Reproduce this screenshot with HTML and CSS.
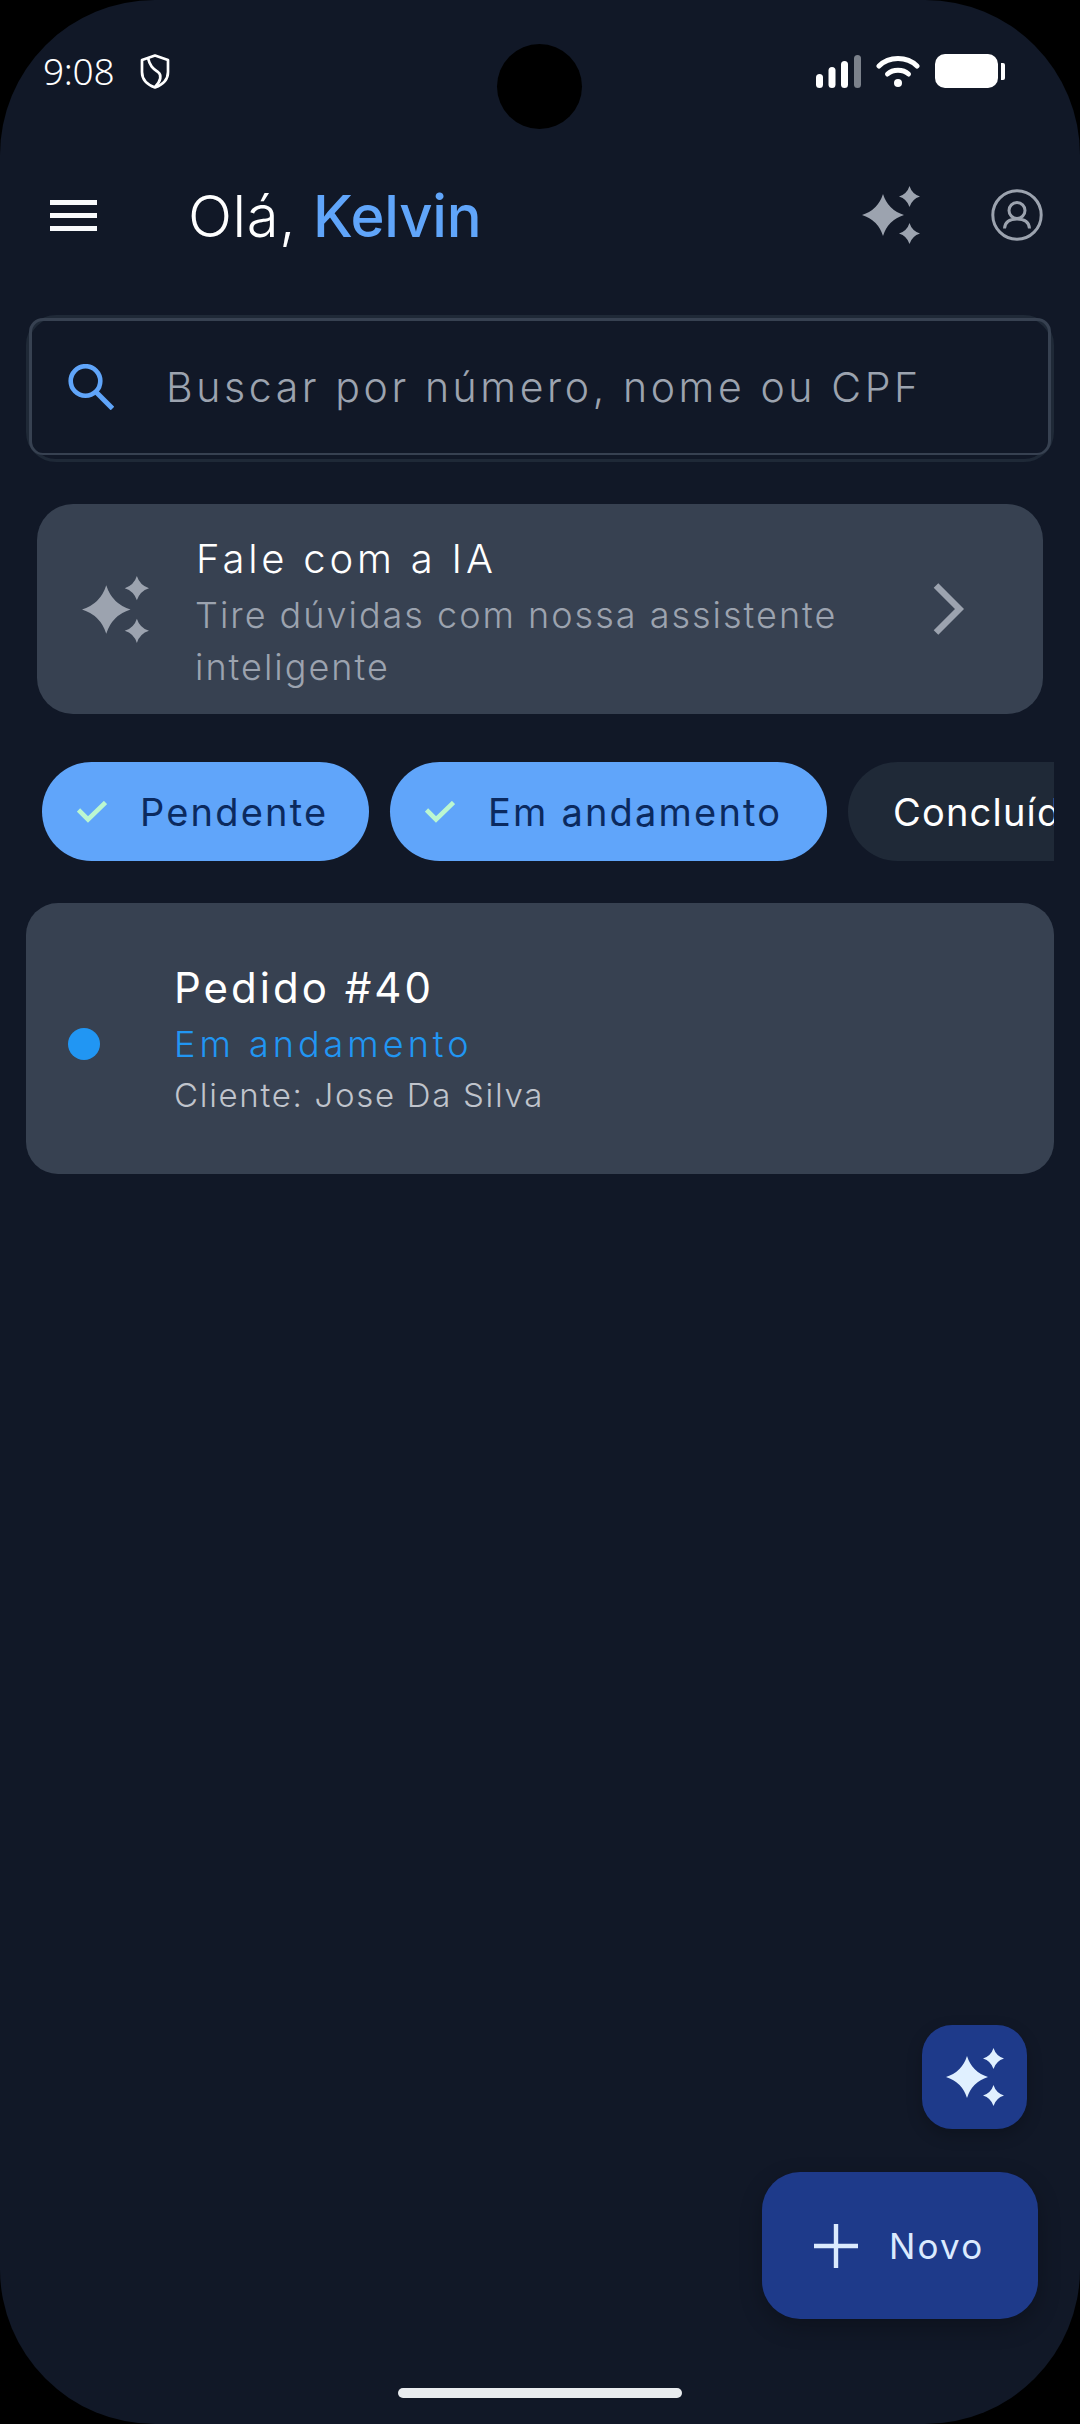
FILE: index.html
```html
<!DOCTYPE html>
<html lang="pt-BR">
<head>
<meta charset="utf-8">
<title>Pedidos</title>
<link rel="stylesheet" href="styles.css">
</head>
<body>
<svg class="defs" width="0" height="0" aria-hidden="true">
  <symbol id="sparkles" viewBox="0 0 58 58">
    <path d="M21 8Q26 24 42 29Q26 34 21 50Q16 34 0 29Q16 24 21 8Z"/>
    <path d="M47.5 0Q50 8 58 10.5Q50 13 47.5 21Q45 13 37 10.5Q45 8 47.5 0Z"/>
    <path d="M47.5 37Q50 45 58 47.5Q50 50 47.5 58Q45 50 37 47.5Q45 45 47.5 37Z"/>
  </symbol>
</svg>
<main class="phone">
  <div class="camera"></div>

  <div class="status">
    <span class="time">9:08</span>
    <svg class="shield" viewBox="0 0 30 35" fill="none" stroke="#fff" stroke-width="2.7" stroke-linejoin="round">
      <path d="M15 1.5L28 6V18C28 26 22 31 15 33.5C8 31 2 26 2 18V6Z"/>
      <path d="M8 4C10 13 14 15 18 18C22 21 21 27 15 33"/>
    </svg>
    <div class="status-right">
      <svg class="signal" viewBox="0 0 45 33">
        <rect x="0" y="19" width="7" height="14" rx="3.5" fill="#fff"/>
        <rect x="12.5" y="12" width="7" height="21" rx="3.5" fill="#fff"/>
        <rect x="25" y="6" width="7" height="27" rx="3.5" fill="#fff"/>
        <rect x="38" y="0" width="7" height="33" rx="3.5" fill="#7b818b"/>
      </svg>
      <svg class="wifi" viewBox="0 0 44 33" fill="none" stroke="#fff" stroke-width="5" stroke-linecap="round">
        <path d="M3 11C13 1 31 1 41 11"/>
        <path d="M11.5 19C17 14 27 14 32.5 19"/>
        <circle cx="22" cy="28" r="4" fill="#fff" stroke="none"/>
      </svg>
      <div class="battery"><span class="battery-body"></span><span class="battery-nub"></span></div>
    </div>
  </div>

  <header class="topbar">
    <div class="menu"><span></span><span></span><span></span></div>
    <h1 class="greeting">Olá, <b>Kelvin</b></h1>
    <div class="top-actions">
      <svg class="spark spark-head"><use href="#sparkles"/></svg>
      <svg class="profile" viewBox="0 0 52 52" fill="none" stroke="#9ca3af" stroke-width="3">
        <circle cx="26" cy="26" r="24.2"/>
        <circle cx="26" cy="21.5" r="8"/>
        <path d="M13.5 39.5C14 33 19 30 26 30C33 30 38 33 38.5 39.5"/>
      </svg>
    </div>
  </header>

  <div class="search-wrap">
    <div class="search">
      <svg class="search-icon" viewBox="0 0 46 46" fill="none" stroke="#60a5fa" stroke-width="4.6">
        <circle cx="17.5" cy="17" r="14.8"/>
        <path d="M28 28L44.5 44.5" stroke-width="5"/>
      </svg>
      <span class="placeholder">Buscar por número, nome ou CPF</span>
    </div>
  </div>

  <section class="ai-card">
    <svg class="spark spark-ai"><use href="#sparkles"/></svg>
    <div class="ai-text">
      <div class="ai-title">Fale com a IA</div>
      <div class="ai-sub">Tire dúvidas com nossa assistente<br>inteligente</div>
    </div>
    <svg class="chevron" viewBox="0 0 31 52" fill="none" stroke="#9ca3af" stroke-width="6.5">
      <path d="M3 2.5L26.5 26L3 49.5"/>
    </svg>
  </section>

  <div class="chips">
    <div class="chip chip-on">
      <svg class="check" viewBox="0 0 30 22" fill="none" stroke="#bbf7d0" stroke-width="4.6"><path d="M1.5 9L11 18.5L28.5 1.5"/></svg>
      <span class="chip-label">Pendente</span>
    </div>
    <div class="chip chip-on">
      <svg class="check" viewBox="0 0 30 22" fill="none" stroke="#bbf7d0" stroke-width="4.6"><path d="M1.5 9L11 18.5L28.5 1.5"/></svg>
      <span class="chip-label">Em andamento</span>
    </div>
    <div class="chip chip-off"><span class="chip-done">Concluído</span></div>
  </div>

  <article class="order">
    <span class="dot"></span>
    <div class="order-text">
      <div class="order-title">Pedido #40</div>
      <div class="order-state">Em andamento</div>
      <div class="order-client">Cliente: Jose Da Silva</div>
    </div>
  </article>

  <div class="fabs">
    <button class="fab-ai" type="button"><svg class="spark spark-fab"><use href="#sparkles"/></svg></button>
    <button class="fab-new" type="button">
      <svg class="plus" viewBox="0 0 44 44" fill="none" stroke="#dbeafe" stroke-width="4.4"><path d="M22 0V44M0 22H44"/></svg>
      <span>Novo</span>
    </button>
  </div>

  <div class="homebar"></div>
</main>
</body>
</html>
```

FILE: styles.css
```css
* { box-sizing: border-box; }
html, body { margin: 0; padding: 0; background: #000; }
body { width: 1080px; height: 2424px; overflow: hidden; font-family: "Inter", "Liberation Sans", sans-serif; }
.defs { position: absolute; }
.phone { position: relative; width: 1080px; height: 2424px; background: #111827; border-radius: 155px; overflow: hidden; display: flex; flex-direction: column; }
.camera { position: absolute; left: 497px; top: 44px; width: 85px; height: 85px; border-radius: 50%; background: #000; }

.status { height: 142px; flex: none; display: flex; align-items: center; padding: 0 75px 0 43px; color: #fff; }
.time { font-family: "Noto Sans", sans-serif; font-size: 37px; line-height: 44px; font-weight: 300; letter-spacing: -0.3px; width: 70px; white-space: nowrap; }
.shield { width: 30px; height: 35px; margin-left: 27px; }
.status-right { margin-left: auto; display: flex; align-items: center; }
.signal { width: 45px; height: 33px; }
.wifi { width: 44px; height: 33px; margin-left: 15px; }
.battery { display: flex; align-items: center; margin-left: 15px; }
.battery-body { width: 63px; height: 34px; background: #fff; border-radius: 10px; }
.battery-nub { width: 4px; height: 17px; margin-left: 3px; background: #fff; border-radius: 0 2px 2px 0; }

.topbar { height: 146px; flex: none; display: flex; align-items: center; padding: 0 37px 0 50px; }
.menu { width: 47px; display: flex; flex-direction: column; gap: 8px; }
.menu span { height: 5px; background: #f8fafc; }
.greeting { margin: 2px 0 0 91px; font-size: 58px; line-height: 70px; font-weight: 300; color: #fff; letter-spacing: 0.6px; white-space: nowrap; }
.greeting b { font-weight: 500; color: #60a5fa; letter-spacing: -0.2px; }
.top-actions { margin-left: auto; display: flex; align-items: center; gap: 71px; }
.spark { display: block; fill: #9ca3af; }
.spark-head { width: 58px; height: 58px; }
.profile { width: 52px; height: 52px; }

.search-wrap { flex: none; height: 147px; margin: 27px 26px 0; border: 3px solid #1f2937; border-radius: 30px; }
.search { height: 137px; border: 3px solid #374151; border-bottom-width: 2px; border-radius: 14px; display: flex; align-items: center; padding: 0 0 0 36px; }
.search-icon { width: 46px; height: 46px; flex: none; }
.placeholder { margin-left: 52px; font-size: 41px; line-height: 50px; font-weight: 300; color: #9ca3af; letter-spacing: 3.6px; white-space: nowrap; }

.ai-card { flex: none; height: 210px; margin: 42px 37px 0; border-radius: 36px; background: #374151; display: flex; align-items: center; padding: 0 79px 0 45px; }
.spark-ai { width: 67px; height: 67px; flex: none; }
.ai-text { margin-left: 46px; padding-top: 4px; }
.ai-title { font-size: 40px; line-height: 60px; font-weight: 300; color: #fff; letter-spacing: 3.8px; white-space: nowrap; margin-left: 1px; }
.ai-sub { font-size: 36px; line-height: 52px; font-weight: 300; color: #9ca3af; letter-spacing: 2px; white-space: nowrap; }
.chevron { width: 31px; height: 52px; margin-left: auto; flex: none; }

.chips { flex: none; height: 99px; margin: 48px 26px 0 42px; display: flex; gap: 21px; overflow: hidden; }
.chip { flex: none; height: 99px; border-radius: 50px; display: flex; align-items: center; font-size: 38px; line-height: 46px; font-weight: 400; white-space: nowrap; }
.chip-on { background: #60a5fa; color: #0b2a5f; padding: 0 0 0 35px; }
.chip-on:nth-child(1) { width: 327px; }
.chip-on:nth-child(2) { width: 437px; }
.chip-off { background: #1f2937; color: #fff; padding: 0 48px 0 45px; }
.check { width: 30px; height: 22px; flex: none; }
.chip-label { margin-left: 33px; letter-spacing: 2.2px; }
.chip-done { letter-spacing: 1.2px; }

.order { flex: none; height: 271px; margin: 42px 26px 0; border-radius: 32px; background: #374151; display: flex; align-items: center; padding: 0 0 0 42px; }
.dot { width: 32px; height: 32px; flex: none; margin-top: 10px; border-radius: 50%; background: #2196f3; }
.order-text { margin-left: 74px; }
.order-title { font-size: 42px; line-height: 61px; font-weight: 400; color: #fff; letter-spacing: 3px; white-space: nowrap; }
.order-state { font-size: 36px; line-height: 52px; font-weight: 300; color: #2196f3; letter-spacing: 4px; white-space: nowrap; }
.order-client { font-size: 33px; line-height: 50px; font-weight: 300; color: #c0c4cc; letter-spacing: 1.7px; white-space: nowrap; }

.fabs { position: absolute; right: 42px; bottom: 105px; display: flex; flex-direction: column; align-items: flex-end; gap: 43px; }
.fab-ai, .fab-new { border: 0; padding: 0; background: #1e3a8a; display: flex; align-items: center; font-family: inherit; }
.fab-ai { width: 105px; height: 104px; margin-right: 11px; border-radius: 30px; justify-content: center; box-shadow: 0 6px 16px rgba(0, 0, 0, .22); }
.spark-fab { width: 58px; height: 58px; fill: #e0f0ff; }
.fab-new { width: 276px; height: 147px; border-radius: 38px; padding-left: 52px; color: #dbeafe; font-size: 35px; font-weight: 400; box-shadow: 0 8px 22px rgba(0, 0, 0, .25); }
.plus { width: 44px; height: 44px; flex: none; }
.fab-new span { margin-left: 31px; letter-spacing: 2.2px; }

.homebar { position: absolute; left: 398px; top: 2388px; width: 284px; height: 10px; border-radius: 5px; background: #e9ecef; }
```
